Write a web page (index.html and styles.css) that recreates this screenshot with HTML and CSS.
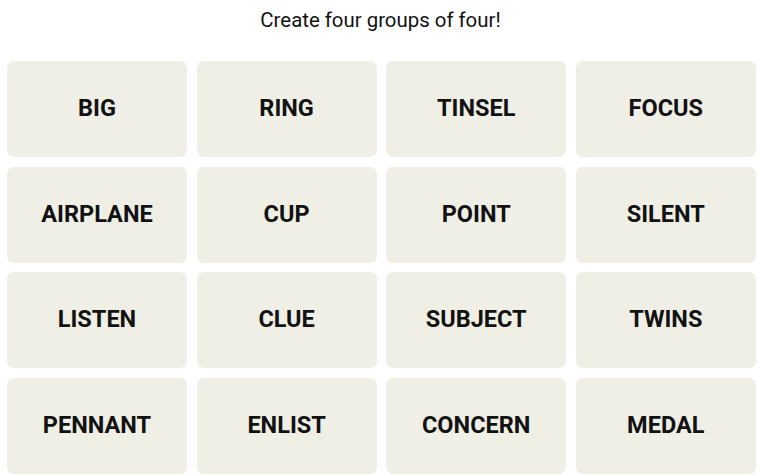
FILE: index.html
```html
<!DOCTYPE html>
<html lang="en">
<head>
<meta charset="utf-8">
<title>Connections</title>
<link rel="stylesheet" href="styles.css">
</head>
<body>
<main class="game">
  <p class="prompt">Create four groups of four!</p>
  <div class="board">
    <button class="tile">BIG</button>
    <button class="tile">RING</button>
    <button class="tile">TINSEL</button>
    <button class="tile">FOCUS</button>
    <button class="tile">AIRPLANE</button>
    <button class="tile">CUP</button>
    <button class="tile">POINT</button>
    <button class="tile">SILENT</button>
    <button class="tile">LISTEN</button>
    <button class="tile">CLUE</button>
    <button class="tile">SUBJECT</button>
    <button class="tile">TWINS</button>
    <button class="tile">PENNANT</button>
    <button class="tile">ENLIST</button>
    <button class="tile">CONCERN</button>
    <button class="tile">MEDAL</button>
  </div>
</main>
</body>
</html>
```
FILE: styles.css
```css
html, body {
  margin: 0;
  padding: 0;
  background: #ffffff;
}

.game {
  width: 757px;
  display: flex;
  flex-direction: column;
  align-items: center;
}

.prompt {
  margin: 0;
  padding: 8px 0 29px 4px;
  font-family: Roboto, "Liberation Sans", sans-serif;
  font-size: 20.4px;
  line-height: 24px;
  color: #121212;
}

.board {
  align-self: flex-start;
  margin-left: 7px;
  display: grid;
  grid-template-columns: repeat(4, 180px);
  grid-auto-rows: 96px;
  gap: 9.6px;
}

.tile {
  border: none;
  border-radius: 7px;
  background: #efefe6;
  color: #121212;
  font-family: Roboto, "Liberation Sans", sans-serif;
  font-weight: 700;
  font-size: 23.5px;
  padding: 0 0 2px;
  display: flex;
  align-items: center;
  justify-content: center;
}
```
